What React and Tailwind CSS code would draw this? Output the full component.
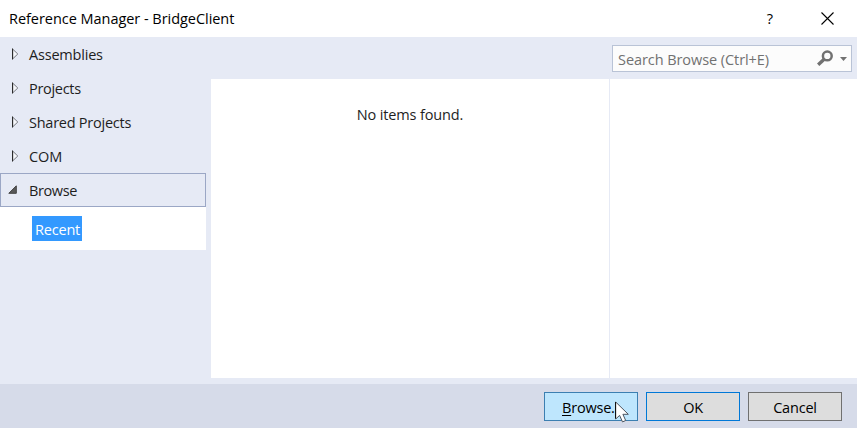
import React from 'react';

const categories = [
  { label: 'Assemblies', spacing: 'tracking-[-0.2px]' },
  { label: 'Projects', spacing: 'tracking-[-0.3px]' },
  { label: 'Shared Projects', spacing: 'tracking-[-0.25px]' },
  { label: 'COM', spacing: 'tracking-[-0.1px]' },
];

function Collapsed() {
  return (
    <svg className="mb-px ml-3 h-3 w-[7px]" viewBox="0 0 7 12">
      <path d="M.75 1.2v9.6L5.8 6z" fill="#f6f7fb" stroke="#75777d" strokeWidth="1" />
      <path d="M.5 .5v11" stroke="#2b2b2b" strokeWidth="1" />
    </svg>
  );
}

function Expanded() {
  return (
    <svg className="mb-px ml-2 h-[9px] w-[9px]" viewBox="0 0 9 9">
      <path d="M8.3.8v7.5H.8z" fill="#595959" stroke="#444" strokeWidth="1" />
    </svg>
  );
}

function Cursor() {
  return (
    <svg className="absolute left-[71px] top-[9px] h-[22px] w-[15px]" viewBox="0 0 15 22">
      <path d="M.7 1v17l3.9-3.6 2.9 6.5 3.2-1.4-2.8-6.2h5.4z" fill="#fff" stroke="#4d545e" strokeWidth="1" />
      <path d="M.5 1v16.5" stroke="#111" strokeWidth="1" />
    </svg>
  );
}

export default function App() {
  return (
    <div className="flex h-[428px] w-[857px] flex-col overflow-hidden bg-[#e6eaf5] font-['Open_Sans','Noto_Sans',sans-serif] text-[14.5px] leading-5 text-[#1e1e1e]">
      <header className="flex h-[37px] shrink-0 items-center bg-white pl-[9px] text-black">
        <h1 className="w-[756px] whitespace-nowrap tracking-[-0.04px]">Reference Manager - BridgeClient</h1>
        <button className="w-[10px] text-center">?</button>
        <svg className="ml-[46px] mt-[-1px] h-[13px] w-[13px]" viewBox="0 0 13 13">
          <path d="M.5.5l12 12M12.5.5l-12 12" stroke="#000" strokeWidth="1.1" />
        </svg>
      </header>
      <main className="flex h-[347px] shrink-0">
        <nav className="w-[206px]">
          {categories.map((c) => (
            <div key={c.label} className="flex h-[34px] items-center">
              <div className="w-[29px]"><Collapsed /></div>
              <span className={`pt-[2px] ${c.spacing}`}>{c.label}</span>
            </div>
          ))}
          <div className="flex h-[34px] items-center border border-[#9ba7c5]">
            <div className="w-7"><div className="-ml-px"><Expanded /></div></div>
            <span className="pt-[2px] tracking-[-0.4px]">Browse</span>
          </div>
          <div className="h-[43px] bg-white pl-8 pt-[9px]">
            <div className="h-[25px] w-[50px] bg-[#3399ff] pl-[3px] leading-[27px] tracking-[-0.2px] text-white">Recent</div>
          </div>
        </nav>
        <section className="ml-[5px] flex w-[646px] flex-col">
          <div className="flex h-[42px] shrink-0 items-start justify-end pr-[5px] pt-2">
            <div className="flex h-[27px] w-[240px] items-center border border-[#b9c3d6] bg-[#fcfcfc] pl-[5px] text-[#717171]">
              <span className="w-[199px] whitespace-nowrap pt-[2px] tracking-[-0.07px]">Search Browse (Ctrl+E)</span>
              <svg className="-mt-px h-4 w-4" viewBox="0 0 16 16" fill="none" stroke="#717171">
                <circle cx="10.3" cy="5.9" r="4.4" strokeWidth="2.5" />
                <path d="M7.1 9.2L1.2 14.8" strokeWidth="3.4" />
              </svg>
              <svg className="ml-[7px] h-1 w-[7px]" viewBox="0 0 7 4"><path d="M0 0h7L3.5 4z" fill="#717171" /></svg>
            </div>
          </div>
          <div className="flex h-[299px] bg-white">
            <div className="w-[399px] border-r border-[#e6eaf5] pt-[26px] text-center tracking-[-0.15px]">No items found.</div>
            <div className="flex-1" />
          </div>
        </section>
      </main>
      <footer className="flex h-11 items-start justify-end gap-2 bg-[#d6dbe9] pr-[15px] pt-2 text-black">
        <div className="relative">
          <button className="h-[29px] w-[94px] border border-[#3c7fb1] bg-[#bee6fd] pl-[17px] pt-[2px] text-left tracking-[-0.2px]">
            <span className="underline underline-offset-2">B</span>rowse...
          </button>
          <Cursor />
        </div>
        <button className="h-[29px] w-[94px] border border-[#0078d7] bg-[#dddddd] pt-[2px] tracking-[-0.3px]">OK</button>
        <button className="h-[29px] w-[94px] border border-[#707070] bg-[#dddddd] pt-[2px] tracking-[-0.2px]">Cancel</button>
      </footer>
    </div>
  );
}
